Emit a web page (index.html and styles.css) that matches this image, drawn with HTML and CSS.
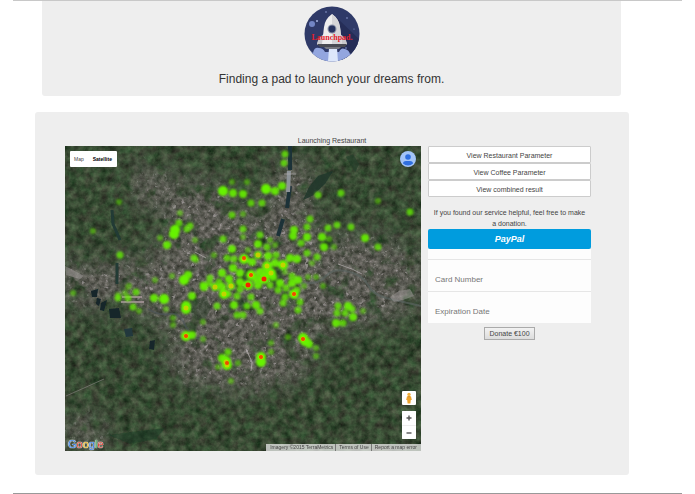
FILE: index.html
```html
<!DOCTYPE html>
<html lang="en">
<head>
    <meta charset="UTF-8">
    <meta name="viewport" content="width=device-width, initial-scale=1.0">
    <title>Launchpad</title>
    <link rel="stylesheet" href="styles.css">
</head>
<body>
    <div class="page">
        <!-- Header -->
        <div class="jumbotron">
            <svg class="logo" viewBox="0 0 56 56" role="img" aria-label="Launchpad">
                <defs>
                    <clipPath id="disc"><circle cx="28" cy="28" r="27.5"/></clipPath>
                </defs>
                <g clip-path="url(#disc)">
                    <rect width="56" height="56" fill="#2f3a68"/>
                    <path d="M33 12L58 36V56H38L33 38Z" fill="#252d57"/>
                    <circle cx="8" cy="18" r="3" fill="#7386c4"/>
                    <circle cx="13" cy="15" r="1" fill="#a9b6e0"/>
                    <circle cx="22" cy="6" r="0.8" fill="#8f9ed2"/>
                    <circle cx="43" cy="12" r="0.8" fill="#8f9ed2"/>
                    <circle cx="46" cy="6" r="0.6" fill="#8f9ed2"/>
                    <circle cx="50" cy="23" r="0.6" fill="#8f9ed2"/>
                    <circle cx="42" cy="42" r="0.8" fill="#8f9ed2"/>
                    <path d="M0 56V50Q5 43 9 47Q10 41 15 42Q19 42 21 46H35Q37 41 41 43Q45 44 46 48Q51 45 56 50V56Z" fill="#93a6df"/>
                    <path d="M25 42H33L34 56H24Z" fill="#dde7fb"/>
                    <path d="M13 37L15 32L21 27H35L41 32L43 37V39H13Z" fill="#c9c9cc"/>
                    <path d="M28 8Q35 13 36 21L38 38H18L20 21Q21 13 28 8Z" fill="#eeeeee"/>
                    <path d="M28 8Q35 13 36 21L38 38H28Z" fill="#d6d6d8"/>
                    <circle cx="28" cy="23" r="4.5" fill="#8b93a8"/>
                    <circle cx="28" cy="23" r="3.4" fill="#27335f"/>
                    <path d="M13 38H43L41 41H16Z" fill="#4a4b52"/>
                    <path d="M20 41H37L35 43H22Z" fill="#77787f"/>
                </g>
                <text class="logo-text" x="28" y="34" text-anchor="middle">Launchpad.</text>
            </svg>
            <h1>Finding a pad to launch your dreams from.</h1>
        </div>

        <!-- Map and donation form -->
        <div class="panel">
            <p class="status">Launching Restaurant</p>
            <div class="row">
                <div class="map">
                    <svg class="satellite" viewBox="65 146 356 305" preserveAspectRatio="xMidYMid slice" aria-hidden="true">
                        <defs>
                            <filter id="fields" x="0" y="0" width="100%" height="100%" color-interpolation-filters="sRGB">
                                <feTurbulence type="fractalNoise" baseFrequency="0.13" numOctaves="4" seed="8"/>
                                <feColorMatrix values="0.28 0.14 0 0 0.01  0.36 0 0 0 0.11  0.26 0.08 0 0 0.03  0 0 0 0 1"/>
                            </filter>
                            <filter id="streets" x="0" y="0" width="100%" height="100%" color-interpolation-filters="sRGB">
                                <feTurbulence type="fractalNoise" baseFrequency="0.2" numOctaves="4" seed="21"/>
                                <feColorMatrix values="0.5 0 0 0 0.13  0.46 0 0 0 0.14  0.48 0 0 0 0.11  0 0 0 0 1"/>
                            </filter>
                            <filter id="houses" x="0" y="0" width="100%" height="100%" color-interpolation-filters="sRGB">
                                <feTurbulence type="fractalNoise" baseFrequency="0.22" numOctaves="3" seed="4"/>
                                <feColorMatrix values="0 0 0 0 0.72  0 0 0 0 0.69  0 0 0 0 0.7  7 0 0 0 -4.6"/>
                            </filter>
                            <filter id="ragged" filterUnits="userSpaceOnUse" x="65" y="146" width="356" height="305" color-interpolation-filters="sRGB">
                                <feGaussianBlur in="SourceGraphic" stdDeviation="12" result="area"/>
                                <feTurbulence type="fractalNoise" baseFrequency="0.06" numOctaves="4" seed="3"/>
                                <feColorMatrix values="0 0 0 0 1  0 0 0 0 1  0 0 0 0 1  5 0 0 0 -1.3" result="patches"/>
                                <feComposite in="area" in2="patches" operator="in"/>
                            </filter>
                            <filter id="soft" filterUnits="userSpaceOnUse" x="65" y="146" width="356" height="305"><feGaussianBlur stdDeviation="0.7"/></filter>
                            <filter id="glow" filterUnits="userSpaceOnUse" x="65" y="146" width="356" height="305"><feGaussianBlur stdDeviation="1.3"/></filter>
                            <mask id="city" maskUnits="userSpaceOnUse" x="65" y="146" width="356" height="305">
                                <g filter="url(#ragged)" fill="#fff">
                                    <ellipse cx="250" cy="285" rx="110" ry="72"/>
                                    <ellipse cx="125" cy="285" rx="70" ry="26"/>
                                    <ellipse cx="360" cy="280" rx="68" ry="46"/>
                                    <ellipse cx="75" cy="275" rx="20" ry="16"/>
                                    <ellipse cx="290" cy="205" rx="26" ry="50"/>
                                    <ellipse cx="240" cy="360" rx="76" ry="32"/>
                                    <ellipse cx="150" cy="185" rx="22" ry="22"/>
                                    <ellipse cx="200" cy="215" rx="40" ry="36"/>
                                    <ellipse cx="85" cy="432" rx="26" ry="16"/>
                                </g>
                            </mask>
                        </defs>
                        <rect x="65" y="146" width="356" height="305" filter="url(#fields)"/>
                        <g mask="url(#city)">
                            <rect x="65" y="146" width="356" height="305" filter="url(#streets)" opacity="0.9"/>
                            <rect x="65" y="146" width="356" height="305" filter="url(#houses)" opacity="0.6"/>
                        </g>

                        <!-- woods, reservoirs and rivers -->
                        <g filter="url(#soft)">
                            <path d="M318 176L333 171L325 184L312 196L303 200L309 187Z" fill="#1d3629" opacity="0.85"/>
                            <path d="M346 157L353 154L359 164L355 172L350 164Z" fill="#1e3a26" opacity="0.6"/>
                            <path d="M190 301L206 296L211 308L204 322L192 318Z" fill="#2b3f2b" opacity="0.4"/>
                            <path d="M108 435L130 432L165 428L156 439L130 444Z" fill="#1c3a22" opacity="0.5"/>
                            <path d="M290 146V170M290 186L287 208M283 219L278 236" fill="none" stroke="#1e3238" stroke-width="4"/>
                            <path d="M289 171L288 192" fill="none" stroke="#8d9398" stroke-width="4"/>
                            <path d="M112 210L113 224L120 240M117 263V284" fill="none" stroke="#203a35" stroke-width="3"/>
                            <path d="M91 291L98 289L97 297L92 297ZM101 303L107 300L104 311L100 310ZM109 309L119 308L121 318L110 318ZM97 298L101 299L99 306L96 304Z" fill="#14252a"/>
                            <path d="M124 329L132 328L133 336L126 337Z" fill="#20383d"/>
                            <path d="M150 341L155 340L154 350L149 349Z" fill="#18282b"/>
                            <path d="M66 396L84 388L104 379" fill="none" stroke="#8c8b86" stroke-width="1" opacity="0.6"/>
                            <path d="M148 309Q160 316 170 314T186 327Q194 340 203 339" fill="none" stroke="#4d5657" stroke-width="2" opacity="0.7"/>
                            <path d="M300 283Q318 285 326 276T350 272Q364 276 368 285T386 298L421 306" fill="none" stroke="#59645f" stroke-width="2" opacity="0.7"/>
                            <path d="M122 297H142M121 302H144" fill="none" stroke="#a8969a" stroke-width="2" opacity="0.8"/>
                            <path d="M65 266L71 269L84 276L80 279L66 275ZM390 297L399 291L410 289L414 296L403 300L394 302Z" fill="#a39d9e" opacity="0.5"/>
                            <path d="M338 264L352 269L362 274M246 349L252 362L251 371M195 252L206 258M284 174H296" fill="none" stroke="#b5afb0" stroke-width="1" opacity="0.7"/>
                        </g>

                        <!-- heat map -->
                        <g class="heat" filter="url(#glow)">
                            <path class="heat-faint" d="M119 202h0M93 231h0M180 213h0M160 238h0M155 280h0M128 287h0M232 182h0M247 182h0M243 214h0M329 239h0M243 237h0M334 247h0M275 245h0M248 250h0M312 263h0M308 277h0M316 277h0M323 286h0M73 293h0M125 293h0M139 311h0M166 309h0M173 318h0M203 339h0M218 367h0M231 381h0M238 363h0M276 325h0M363 311h0M316 348h0M316 356h0M288 337h0M271 343h0M271 352h0M378 201h0M195 240h0M196 260h0M214 255h0M172 276h0M129 286h0M203 322h0M173 325h0M270 240h0M285 272h0M304 286h0M118 295h0"/>
                            <path class="heat-small" d="M285 154h0M284 163h0M179 223h0M187 229h0M190 226h0M232 215h0M223 239h0M227 258h0M194 258h0M210 278h0M251 203h0M262 203h0M318 195h0M341 193h0M410 212h0M310 219h0M307 227h0M301 243h0M328 228h0M337 225h0M351 227h0M378 247h0M243 229h0M267 247h0M307 253h0M317 257h0M120 255h0M118 298h0M136 292h0M133 307h0M217 306h0M228 352h0M285 297h0M283 303h0M298 310h0M300 302h0M247 306h0M260 311h0M243 315h0M237 315h0M338 306h0M337 313h0M345 313h0M343 323h0M352 309h0M260 235h0M234 259h0M276 255h0M292 276h0M297 290h0M286 288h0M278 290h0M228 294h0M240 289h0M251 297h0M237 296h0M270 285h0M203 285h0M209 283h0M219 282h0M128 298h0"/>
                            <path class="heat-mid" d="M233 193h0M243 194h0M275 191h0M282 186h0M167 245h0M232 249h0M222 273h0M215 287h0M204 287h0M233 268h0M307 237h0M294 230h0M293 236h0M322 237h0M324 247h0M365 238h0M258 244h0M258 255h0M268 256h0M290 258h0M297 259h0M275 263h0M154 298h0M192 296h0M234 305h0M256 305h0M348 306h0M353 317h0M336 323h0M192 335h0M222 358h0M309 344h0M273 277h0M280 283h0M292 283h0M298 280h0M252 262h0M260 272h0M240 273h0M229 279h0M231 286h0M258 285h0M240 282h0M222 287h0M256 279h0M267 273h0M188 275h0"/>
                            <path class="heat-big" d="M223 191h0M266 189h0M174 234h0M175 230h0M184 280h0M164 299h0M186 306h0M186 309h0M186 336h0M226 361h0M227 365h0M261 357h0M261 362h0M303 338h0M305 341h0M294 294h0M248 285h0M264 279h0M251 275h0M244 259h0M267 266h0M283 265h0M271 273h0M224 294h0"/>
                        </g>
                        <g class="heat" filter="url(#soft)">
                            <path class="heat-warm" d="M244 259h0M267 266h0M283 265h0M271 273h0M224 294h0M186 308h0M251 275h0M264 279h0M248 285h0M294 294h0M186 336h0M226 362h0M227 365h0M261 357h0M303 339h0M215 287h0M231 286h0M258 255h0"/>
                            <path class="heat-hot" d="M244 258h0M251 275h0M264 279h0M294 294h0M186 336h0M227 363h0M261 357h0M303 339h0"/>
                            <path class="heat-peak" d="M248 285h0M264 279h0"/>
                        </g>
                    </svg>

                    <div class="map-type">
                        <button type="button">Map</button>
                        <button type="button" class="active">Satellite</button>
                    </div>

                    <button type="button" class="account" aria-label="Account">
                        <svg viewBox="0 0 16 16">
                            <circle cx="8" cy="8" r="8" fill="#a3c4f8"/>
                            <circle cx="8" cy="6" r="2.8" fill="#2f6fe0"/>
                            <path d="M3 12.5Q3 10 6 10H10Q13 10 13 12.5Q11 14.5 8 14.5T3 12.5Z" fill="#2f6fe0"/>
                        </svg>
                    </button>

                    <div class="map-controls">
                        <button type="button" class="pegman" aria-label="Street View">
                            <svg viewBox="0 0 14 14">
                                <circle cx="7" cy="3.4" r="1.7" fill="#f3b13c"/>
                                <path d="M5 5.2H9L9.8 9H8.8L8.4 12.6H5.6L5.2 9H4.2Z" fill="#eda32c"/>
                                <path d="M6 5.2H8L7 6.6Z" fill="#b8720f"/>
                            </svg>
                        </button>
                        <div class="zoom">
                            <button type="button" aria-label="Zoom in">
                                <svg viewBox="0 0 14 14"><path d="M4.5 7H9.5M7 4.5V9.5" stroke="#555" stroke-width="1.4"/></svg>
                            </button>
                            <button type="button" aria-label="Zoom out">
                                <svg viewBox="0 0 14 14"><path d="M4.5 7H9.5" stroke="#555" stroke-width="1.4"/></svg>
                            </button>
                        </div>
                    </div>

                    <div class="google"><span class="blue">G</span><span class="red">o</span><span class="yellow">o</span><span class="blue">g</span><span class="green">l</span><span class="red">e</span></div>

                    <div class="credits">
                        <span>Imagery ©2015 TerraMetrics</span>
                        <a href="#">Terms of Use</a>
                        <a href="#">Report a map error</a>
                    </div>
                </div>

                <div class="sidebar">
                    <button type="button" class="btn">View Restaurant Parameter</button>
                    <button type="button" class="btn">View Coffee Parameter</button>
                    <button type="button" class="btn">View combined result</button>

                    <p class="note">If you found our service helpful, feel free to make<br>a donation.</p>

                    <form class="payment">
                        <button type="button" class="paypal">PayPal</button>
                        <div class="divider"></div>
                        <input type="text" placeholder="Card Number" aria-label="Card Number">
                        <input type="text" placeholder="Expiration Date" aria-label="Expiration Date">
                        <button type="submit" class="donate">Donate €100</button>
                    </form>
                </div>
            </div>
        </div>
    </div>
</body>
</html>
```

FILE: styles.css
```css
* {
    box-sizing: border-box;
}
body {
    font-family: "Liberation Sans", Arial, sans-serif;
    font-size: 7px;
    line-height: 11px;
    color: #444;
    margin: 0;
    background-color: #fff;
}
button, input {
    font-family: inherit;
    font-size: inherit;
    line-height: inherit;
    color: inherit;
    margin: 0;
    padding: 0;
    border: 0;
}
button {
    cursor: pointer;
}
svg {
    display: block;
}
.page {
    margin: 0 13px;
    padding: 0 53px 18px 22px;
    border-top: 1px solid #c8c8c8;
    border-bottom: 1px solid #999;
}
.jumbotron {
    margin: 0 8px 16px 7px;
    padding: 5px 0 8px;
    background-color: #eee;
    border-radius: 0 0 3px 3px;
    text-align: center;
}
.logo {
    width: 56px;
    height: 56px;
    margin: 0 auto;
}
.logo-text {
    font-family: "Liberation Serif", "Times New Roman", serif;
    font-size: 8px;
    font-weight: bold;
    fill: #e3202c;
}
.jumbotron h1 {
    margin: 9px 0 0;
    font-size: 12px;
    line-height: 17px;
    font-weight: normal;
    color: #333;
}
.panel {
    padding: 23px 0 24px;
    background-color: #eee;
    border-radius: 3px;
}
.status {
    margin: 0;
    text-align: center;
}
.row {
    display: grid;
    grid-template-columns: 356fr 163fr;
    gap: 7px;
    margin: 0 38px 0 30px;
    align-items: start;
}

/* Map */
.map {
    position: relative;
    aspect-ratio: 356 / 305;
    overflow: hidden;
    background-color: #2f4732;
}
.satellite {
    width: 100%;
    height: 100%;
}
.heat {
    fill: none;
    stroke: #66f200;
    stroke-linecap: round;
}
.heat-faint {
    stroke-width: 6px;
    opacity: 0.5;
}
.heat-small {
    stroke-width: 7px;
    opacity: 0.75;
}
.heat-mid {
    stroke-width: 8px;
    opacity: 0.9;
}
.heat-big {
    stroke-width: 10px;
}
.heat-warm {
    stroke: #e8c800;
    stroke-width: 5px;
    opacity: 0.7;
}
.heat-hot {
    stroke: #f04800;
    stroke-width: 4px;
}
.heat-peak {
    stroke: #f02800;
    stroke-width: 5px;
}
.map-type {
    position: absolute;
    top: 5px;
    left: 5px;
    display: flex;
    background-color: #fff;
    border-radius: 1px;
    font-size: 5px;
    line-height: 16px;
}
.map-type button {
    padding: 0 4px;
    background: none;
}
.map-type .active {
    padding-right: 5px;
    padding-left: 5px;
    font-weight: bold;
    color: #000;
}
.account {
    position: absolute;
    top: 5px;
    right: 5px;
    width: 16px;
    height: 16px;
    background: none;
}
.map-controls {
    position: absolute;
    right: 5px;
    bottom: 12px;
    width: 14px;
}
.map-controls button {
    display: block;
    width: 14px;
    height: 14px;
    background-color: #fff;
    border-radius: 1px;
}
.zoom {
    margin-top: 6px;
    background-color: #fff;
    border-radius: 1px;
}
.zoom button + button {
    border-top: 1px solid #eee;
}
.google {
    position: absolute;
    left: 3px;
    bottom: 1px;
    font-size: 11px;
    line-height: 12px;
    text-shadow: 0 0 1px #fff, 0 0 1px #fff, 0 0 1px #fff;
}
.blue {
    color: #3d7fe0;
}
.red {
    color: #dd4b3e;
}
.yellow {
    color: #e8b020;
}
.green {
    color: #38a050;
}
.credits {
    position: absolute;
    right: 0;
    bottom: 0;
    display: flex;
    padding: 0 2px;
    background-color: rgba(235, 235, 235, 0.75);
    font-size: 5px;
    line-height: 7px;
}
.credits > * {
    padding: 0 2px;
    color: #444;
    text-decoration: none;
}
.credits a {
    border-left: 1px solid #777;
    padding-left: 3px;
}

/* Sidebar */
.sidebar {
    text-align: center;
}
.btn {
    display: block;
    width: 100%;
    height: 17px;
    padding-top: 1px;
    background-color: #fff;
    border: 1px solid #ccc;
    border-radius: 1px;
}
.note {
    margin: 10px 0 0;
}
.paypal {
    display: block;
    width: 100%;
    height: 20px;
    background-color: #009cde;
    border-radius: 2px;
    color: #fff;
    font-size: 9px;
    font-weight: bold;
    font-style: italic;
}
.divider {
    height: 10px;
    background-color: #fdfdfd;
}
.payment input {
    display: block;
    width: 100%;
    height: 32px;
    padding: 8px 7px 0;
    background-color: #fdfdfd;
    border-top: 1px solid #e6e6e6;
    border-radius: 0;
    font-size: 8px;
}
.payment input::placeholder {
    color: #777;
    opacity: 1;
}
.donate {
    margin-top: 4px;
    height: 13px;
    padding: 0 4px;
    background: linear-gradient(#f2f2f2, #dcdcdc);
    border: 1px solid #aaa;
}
```
